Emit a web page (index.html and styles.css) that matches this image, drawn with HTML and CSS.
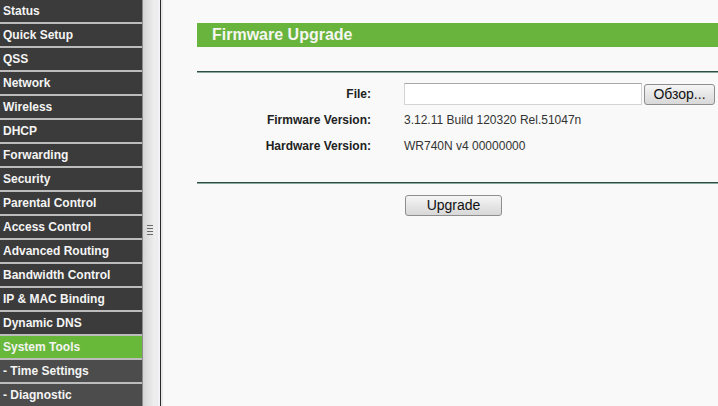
FILE: index.html
```html
<!DOCTYPE html>
<html lang="en">
<head>
    <meta charset="UTF-8">
    <title>Firmware Upgrade</title>
    <link rel="stylesheet" href="styles.css">
</head>
<body>
<div class="frame">
    <!-- left menu -->
    <ul class="menu">
        <li>Status</li>
        <li>Quick Setup</li>
        <li>QSS</li>
        <li>Network</li>
        <li>Wireless</li>
        <li>DHCP</li>
        <li>Forwarding</li>
        <li>Security</li>
        <li>Parental Control</li>
        <li>Access Control</li>
        <li>Advanced Routing</li>
        <li>Bandwidth Control</li>
        <li>IP &amp; MAC Binding</li>
        <li>Dynamic DNS</li>
        <li class="active">System Tools</li>
        <li class="sub">- Time Settings</li>
        <li class="sub">- Diagnostic</li>
    </ul>

    <!-- frame splitter -->
    <div class="splitter">
        <div class="grip"></div>
    </div>

    <!-- main page -->
    <div class="main">
        <div class="title-bar">Firmware Upgrade</div>
        <div class="line"></div>
        <div class="form">
            <div class="label">File:</div>
            <div class="value">
                <input type="text" class="file-box">
                <button class="browse">Обзор...</button>
            </div>
            <div class="label">Firmware Version:</div>
            <div class="value">3.12.11 Build 120320 Rel.51047n</div>
            <div class="label">Hardware Version:</div>
            <div class="value">WR740N v4 00000000</div>
        </div>
        <div class="line line-bottom"></div>
        <div class="form">
            <div></div>
            <div class="value">
                <button class="upgrade">Upgrade</button>
            </div>
        </div>
    </div>
</div>
</body>
</html>
```

FILE: styles.css
```css
/* 整体布局 */
body {
    margin: 0;
    font-family: "Liberation Sans", Arial, sans-serif;
    background-color: #f8f9f8;
    overflow: hidden;
}

.frame {
    display: flex;
    height: 406px;
}

/* 左侧菜单 */
.menu {
    width: 142px;
    flex-shrink: 0;
    margin: 0;
    padding: 0;
    list-style: none;
    background-color: #3b3b3b;
}

.menu li {
    height: 22px;
    line-height: 22px;
    padding-left: 3px;
    border-bottom: 2px solid #bcbcbc;
    color: #f4f4f4;
    font-size: 12px;
    font-weight: bold;
    white-space: nowrap;
}

.menu li.active {
    background-color: #68b83a;
}

.menu li.sub {
    background-color: #4c4c4c;
}

/* 分隔条 */
.splitter {
    width: 19px;
    flex-shrink: 0;
    border-left: 1px solid #8c8c8c;
    border-right: 1px solid #2a2a2a;
    box-shadow: inset -2px 0 0 #f4f4f8;
    background: linear-gradient(to right, #d4d4d4, #efefef 70%, #e6e6ea);
    padding: 225px 0 0 4px;
    box-sizing: border-box;
}

.grip {
    width: 6px;
    height: 10px;
    background: repeating-linear-gradient(to bottom, #6a6a6a 0, #6a6a6a 1px, transparent 1px, transparent 3px);
}

/* 右侧内容 */
.main {
    flex: 1;
    padding-left: 34px;
    border-left: 2px solid #e8e8e8;
}

.title-bar {
    margin-top: 23px;
    height: 24px;
    line-height: 24px;
    padding-left: 15px;
    background-color: #68b43c;
    color: #f6f6f2;
    font-size: 16px;
    font-weight: bold;
}

.line {
    margin-top: 24px;
    height: 1px;
    background-color: #2c4f44;
    border-bottom: 1px solid #8aa89c;
}

.line-bottom {
    margin-top: 23px;
}

/* 表单 */
.form {
    display: grid;
    grid-template-columns: 174px 1fr;
    column-gap: 33px;
    grid-auto-rows: 26px;
    padding-top: 8px;
    font-size: 12px;
    color: #333;
}

.label {
    text-align: right;
    font-weight: bold;
    color: #222;
    line-height: 26px;
}

.value {
    display: flex;
    align-items: center;
    white-space: nowrap;
}

.file-box {
    width: 238px;
    height: 22px;
    box-sizing: border-box;
    margin: 0;
    border: 1px solid #d4d4d4;
    border-top-color: #a8a8a8;
    background-color: #fff;
}

button {
    font-family: "Liberation Sans", Arial, sans-serif;
    font-size: 14px;
    color: #111;
    border: 1px solid #8e8e8e;
    border-radius: 3px;
    background: linear-gradient(to bottom, #f6f6f6, #e6e6e6 50%, #d8d8d8);
    padding: 0;
}

.browse {
    margin-left: 2px;
    width: 71px;
    height: 21px;
}

.upgrade {
    margin-left: 1px;
    width: 97px;
    height: 21px;
}
```
